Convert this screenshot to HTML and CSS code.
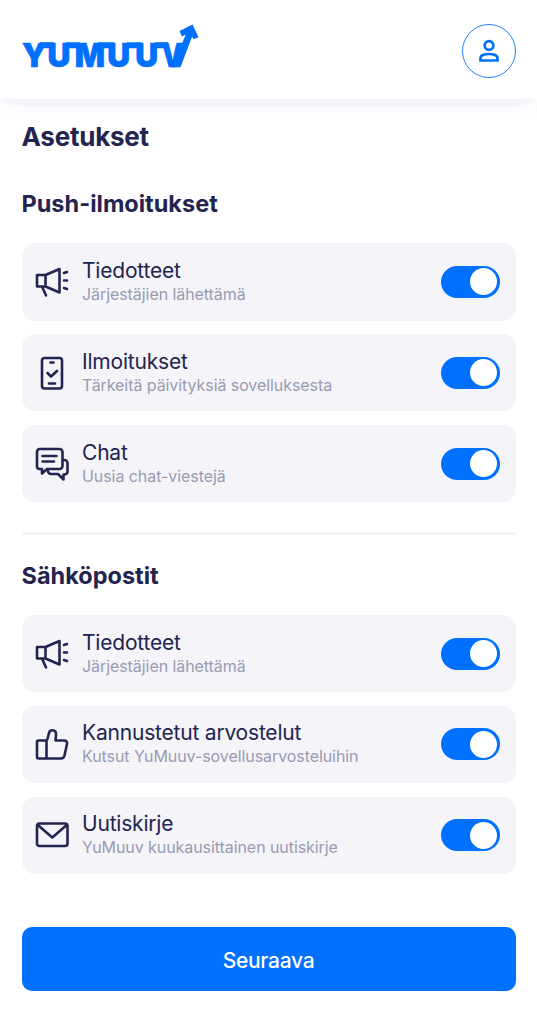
FILE: index.html
```html
<!DOCTYPE html>
<html lang="fi">
<head>
<meta charset="utf-8">
<meta name="viewport" content="width=device-width">
<title>YuMuuv – Asetukset</title>
<link rel="stylesheet" href="styles.css">
</head>
<body>
<svg class="sprite" aria-hidden="true">
  <symbol id="megaphone" viewBox="0 0 34 34"><path d="M2 10h8.500v11.500H2zM10.500 10 24.500 4v23.500l-14-6M7 21.500l4 9M29 8l3-1M29 15.500h3M29 23l3 1"/></symbol>
  <symbol id="phone" viewBox="0 0 34 34"><rect x="7" y="2" width="20" height="30.500" rx="2.500"/><path d="M15.500 6.500h3M14 27.500h6M12.500 17l3.500 3.500 6-5.500"/></symbol>
  <symbol id="chat" viewBox="0 0 34 34"><path d="M4.500 2h20a3 3 0 0 1 3 3v14a3 3 0 0 1-3 3H12l-5 4.500V22H4.500a2.500 2.500 0 0 1-2.500-3V5a3 3 0 0 1 2.500-3zM7.500 9h14M7.500 14.500h11.500M28 13h1.500a3 3 0 0 1 3 3v8.500a3 3 0 0 1-3 3H28.500v5l-5.500-5.500h-7a3 3 0 0 1-3-3v-1.500"/></symbol>
  <symbol id="thumb" viewBox="0 0 34 34"><path d="M3.500 13.500H11.500v18H3.500A1.500 1.500 0 0 1 2 30V15a1.500 1.500 0 0 1 1.500-1.500zM11.500 13.500c1.500-1 1.500-4.500 2.500-7.500 1-4 6.500-3.500 7 .5.300 2.500-.5 4.500-.5 7H29c2.500 0 3.500 1.500 3 3.500L29.500 28.500c-.5 2-1.500 3-3.500 3H11.500"/></symbol>
  <symbol id="mail" viewBox="0 0 34 34"><rect x="2" y="5.500" width="30.500" height="22.500" rx="2.500"/><path d="m2.800 7 14.500 12.500L31.700 7"/></symbol>
</svg>
<header class="header">
  <svg class="logo" viewBox="0 0 178 46" role="img" aria-label="YuMuuv">
    <text class="logo-text" transform="scale(.96 1)" y="42.800" x="0 26.500 55 88.800 118">YUMUU</text>
    <text class="logo-text" transform="scale(.83 1)" y="42.800" x="168">V</text>
    <path d="M18 18.300h14v6H18zM44 18.300h14v6H44zM76 18.300h16v6H76zM105 18.300h14v6h-14zM133 18.300h13v6h-13z"/>
    <path d="M149.500 43.200 163.800 10.800l-4 1.700-2.300-5.500L170.500.5l6 12.700-5 2-1.500-2.500L158.500 43.200z"/>
  </svg>
  <button class="avatar" aria-label="Profiili">
    <svg class="user" viewBox="0 0 22 24"><circle cx="11" cy="6.500" r="4.300"/><path d="M2.500 21.500v-2.500c0-2.500 4-4 8.500-4s8.500 1.500 8.500 4v2.500z"/></svg>
  </button>
</header>
<main class="content">
  <h1 class="page-title">Asetukset</h1>
  <section class="group push">
    <h2 class="group-title">Push-ilmoitukset</h2>
    <div class="cards">
      <label class="card"><svg class="icon"><use href="#megaphone"/></svg><span class="texts"><span class="name">Tiedotteet</span><span class="desc">Järjestäjien lähettämä</span></span><span class="toggle"></span></label>
      <label class="card"><svg class="icon"><use href="#phone"/></svg><span class="texts"><span class="name">Ilmoitukset</span><span class="desc">Tärkeitä päivityksiä sovelluksesta</span></span><span class="toggle"></span></label>
      <label class="card"><svg class="icon"><use href="#chat"/></svg><span class="texts"><span class="name">Chat</span><span class="desc">Uusia chat-viestejä</span></span><span class="toggle"></span></label>
    </div>
  </section>
  <section class="group email">
    <h2 class="group-title">Sähköpostit</h2>
    <div class="cards">
      <label class="card"><svg class="icon"><use href="#megaphone"/></svg><span class="texts"><span class="name">Tiedotteet</span><span class="desc">Järjestäjien lähettämä</span></span><span class="toggle"></span></label>
      <label class="card"><svg class="icon"><use href="#thumb"/></svg><span class="texts"><span class="name">Kannustetut arvostelut</span><span class="desc">Kutsut YuMuuv-sovellusarvosteluihin</span></span><span class="toggle"></span></label>
      <label class="card"><svg class="icon"><use href="#mail"/></svg><span class="texts"><span class="name">Uutiskirje</span><span class="desc">YuMuuv kuukausittainen uutiskirje</span></span><span class="toggle"></span></label>
    </div>
  </section>
  <button class="next">Seuraava</button>
</main>
</body>
</html>
```
FILE: styles.css
```css
* { box-sizing: border-box; }
body {
  margin: 0;
  min-height: 1024px;
  background: #fff;
  color: #23244f;
  font-family: Inter, "Liberation Sans", sans-serif;
}
.sprite { display: none; }
.header {
  position: relative;
  display: flex;
  justify-content: space-between;
  align-items: flex-start;
  height: 99px;
  padding: 24px 21px 0 21.5px;
  background: #fff;
}
.header::after {
  content: "";
  position: absolute;
  left: 0;
  right: 0;
  top: 99px;
  height: 27px;
  background:
    radial-gradient(ellipse 27px 8px at 30px 0, #f4f4f9 85%, transparent) 0 0 / 30px 8px no-repeat,
    radial-gradient(ellipse 27px 8px at 0 0, #f4f4f9 85%, transparent) 100% 0 / 30px 8px no-repeat,
    linear-gradient(#f4f4f9, #f4f4f9) 30px 0 / calc(100% - 60px) 8px no-repeat,
    linear-gradient(#fafbfe, #fff);
}
.logo { width: 178px; height: 46px; fill: #0070ff; overflow: visible; }
.logo-text { font-size: 33px; font-weight: 900; stroke: #0070ff; stroke-width: .6px; }
.avatar {
  display: flex;
  align-items: center;
  justify-content: center;
  width: 54px;
  height: 54px;
  padding: 0;
  border: 1.5px solid #2381ff;
  border-radius: 50%;
  background: #fff;
}
.user { width: 22px; height: 24px; fill: none; stroke: #0070ff; stroke-width: 2.7; }
.content { position: relative; z-index: 1; padding: 22px 21.5px 0; }
.page-title { margin: 0; font-size: 26px; line-height: 32px; font-weight: 700; letter-spacing: -.25px; }
.group-title { margin: 0; font-size: 23.5px; line-height: 30px; font-weight: 700; letter-spacing: 0; }
.push { padding-top: 36px; }
.email { margin-top: 30px; padding-top: 25.5px; border-top: 3px solid #f4f4f9; }
.cards { display: grid; gap: 13.4px; margin-top: 24px; }
.card {
  display: flex;
  align-items: center;
  height: 77.5px;
  padding: 0 16px 0 13.5px;
  border-radius: 13px;
  background: #f4f4f9;
}
.icon { flex: none; width: 34px; height: 34px; fill: none; stroke: #23244f; stroke-width: 2.6; stroke-linecap: round; stroke-linejoin: round; }
.texts { display: grid; flex: 1; margin: 0 0 2px 13px; }
.name { font-size: 21px; line-height: 26px; letter-spacing: -.2px; }
.desc { font-size: 16px; line-height: 20px; letter-spacing: -.07px; color: #9a9bb2; }
.toggle { flex: none; width: 59px; height: 32px; padding: 2.5px; border-radius: 16px; background: #0070ff; }
.toggle::before { content: ""; display: block; width: 27px; height: 27px; margin-left: auto; border-radius: 50%; background: #fff; }
.next {
  display: block;
  width: 100%;
  height: 64px;
  margin-top: 53.2px;
  padding: 2px 0 0;
  border: 0;
  border-radius: 10px;
  background: #0070ff;
  color: #fff;
  font: 500 21px Inter, "Liberation Sans", sans-serif;
  letter-spacing: -.3px;
}
```
